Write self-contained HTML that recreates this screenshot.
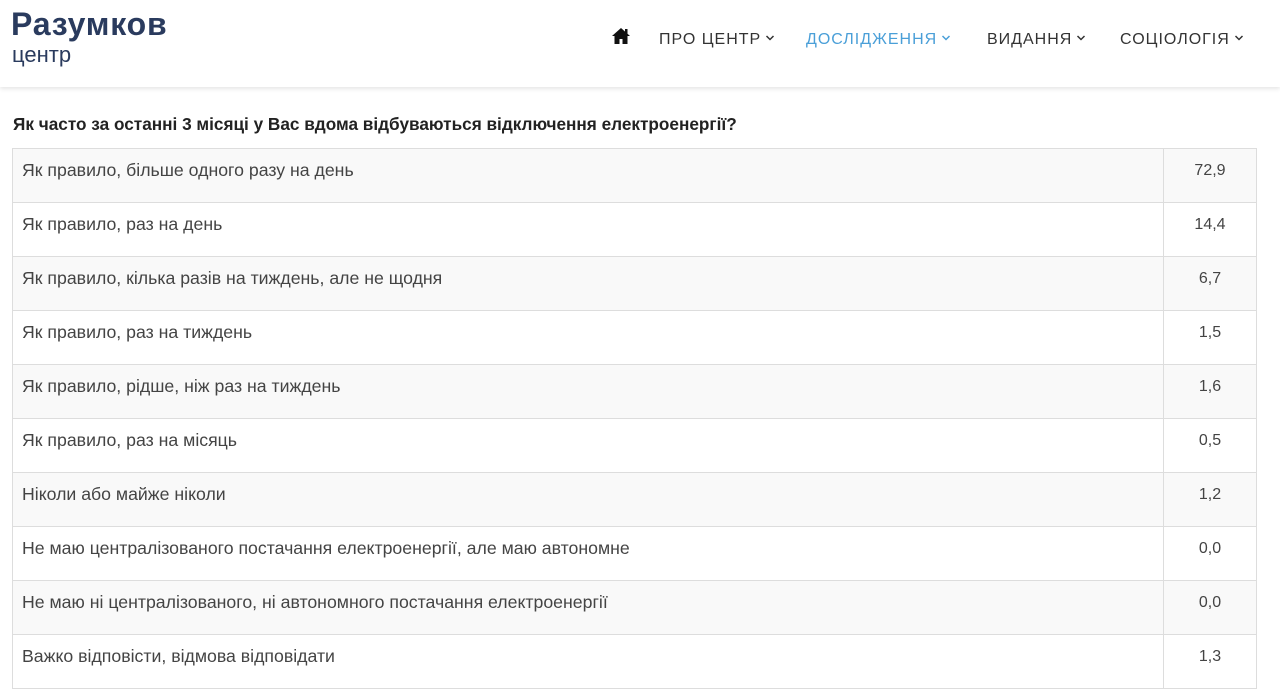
<!DOCTYPE html>
<html><head><meta charset="utf-8"><style>
body{margin:0;background:#fff;font-family:"Liberation Sans","DejaVu Sans",sans-serif;width:1280px;height:697px;overflow:hidden}
.hdr{height:87px;background:#fff;box-shadow:0 2px 4px rgba(0,0,0,.1);position:relative}
.logo1{position:absolute;left:11px;top:6px;font-size:32px;font-weight:bold;color:#2a3b5e;letter-spacing:0.8px}
.logo2{position:absolute;left:12px;top:42px;font-size:22px;color:#2a3b5e}
.nav{position:absolute;top:31px;left:611px;font-size:16px;letter-spacing:1px;color:#333;white-space:nowrap}
.nav>span{position:absolute;top:0}
.ch{display:inline-block;vertical-align:middle;margin-left:4px;margin-top:-3px}
h3{position:absolute;margin:0;top:114px;left:13px;font-size:17.2px;font-weight:bold;color:#222}
table{position:absolute;top:148px;left:12px;width:1245px;border-collapse:collapse;font-size:17.7px;color:#444}
td{border:1px solid #ddd;height:54px;padding:0 9px;vertical-align:top;padding-top:11px;box-sizing:border-box}
tr:nth-child(odd) td{background:#f9f9f9}
td.n{width:93px;text-align:center;font-size:16px;padding-top:13px}
</style></head><body>
<div class="hdr">
<div class="logo1">Разумков</div><div class="logo2">центр</div>
<div class="nav">
<span style="left:0;top:-4px"><svg width="20" height="18" viewBox="0 0 20 18"><path d="M10 1L1 9h2.5v8h5v-5h3v5h5V9H19L10 1z" fill="#111"/><rect x="14" y="2" width="2.5" height="5" fill="#111"/></svg></span>
<span style="left:48px">ПРО ЦЕНТР<svg class="ch" width="10" height="8" viewBox="0 0 10 8"><path d="M1.5 2l3.5 3.5 3.5-3.5" stroke="#333" stroke-width="1.5" fill="none"/></svg></span>
<span style="left:195px;color:#4a9fd8">ДОСЛІДЖЕННЯ<svg class="ch" width="10" height="8" viewBox="0 0 10 8"><path d="M1.5 2l3.5 3.5 3.5-3.5" stroke="#4a9fd8" stroke-width="1.5" fill="none"/></svg></span>
<span style="left:376px">ВИДАННЯ<svg class="ch" width="10" height="8" viewBox="0 0 10 8"><path d="M1.5 2l3.5 3.5 3.5-3.5" stroke="#333" stroke-width="1.5" fill="none"/></svg></span>
<span style="left:509px">СОЦІОЛОГІЯ<svg class="ch" width="10" height="8" viewBox="0 0 10 8"><path d="M1.5 2l3.5 3.5 3.5-3.5" stroke="#333" stroke-width="1.5" fill="none"/></svg></span>
</div>
</div>
<h3>Як часто за останні 3 місяці у Вас вдома відбуваються відключення електроенергії?</h3>
<table>
<tr><td>Як правило, більше одного разу на день</td><td class="n">72,9</td></tr>
<tr><td>Як правило, раз на день</td><td class="n">14,4</td></tr>
<tr><td>Як правило, кілька разів на тиждень, але не щодня</td><td class="n">6,7</td></tr>
<tr><td>Як правило, раз на тиждень</td><td class="n">1,5</td></tr>
<tr><td>Як правило, рідше, ніж раз на тиждень</td><td class="n">1,6</td></tr>
<tr><td>Як правило, раз на місяць</td><td class="n">0,5</td></tr>
<tr><td>Ніколи або майже ніколи</td><td class="n">1,2</td></tr>
<tr><td>Не маю централізованого постачання електроенергії, але маю автономне</td><td class="n">0,0</td></tr>
<tr><td>Не маю ні централізованого, ні автономного постачання електроенергії</td><td class="n">0,0</td></tr>
<tr><td>Важко відповісти, відмова відповідати</td><td class="n">1,3</td></tr>
</table>
</body></html>
